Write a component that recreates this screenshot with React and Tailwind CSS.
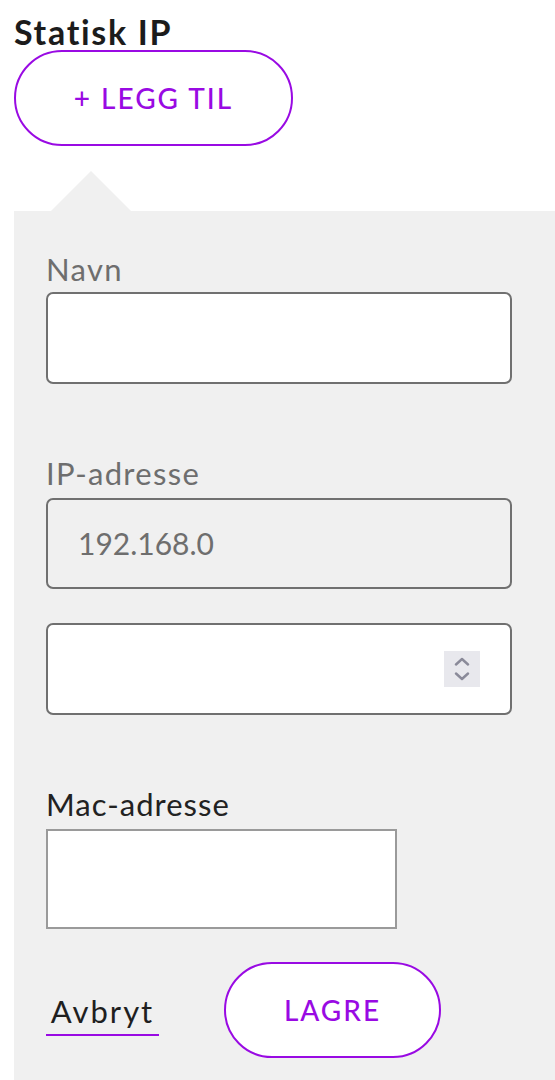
import React from "react";

export default function App() {
  return (
    <div className="w-[555px] h-[1080px] overflow-hidden bg-white font-['Lato',_sans-serif]">
      <h1 className="pl-[14px] pt-[14px] text-[34px] leading-[36px] font-bold tracking-[1.7px] text-[#1c1c1c]">
        Statisk IP
      </h1>
      <button className="ml-[14px] flex h-[96px] w-[279px] items-center justify-center rounded-full border-2 border-[#990ae3] bg-white text-[28px] font-medium tracking-[2px] text-[#990ae3]">
        + LEGG TIL
      </button>
      <div className="ml-[51px] mt-[25px] h-0 w-0 border-x-[40px] border-b-[40px] border-x-transparent border-b-[#f0f0f0]" />
      <div className="ml-[14px] bg-[#f0f0f0] pl-[32px] pr-[43px] pt-[40px] pb-[40px]">
        <label className="block h-[36px] text-[31px] leading-[36px] tracking-[1.3px] text-[#6e6e6e]">Navn</label>
        <div className="mt-[5px] h-[92px] rounded-[7px] border-2 border-[#707070] bg-white" />

        <label className="mt-[71px] block h-[36px] text-[31px] leading-[36px] tracking-[1.3px] text-[#6e6e6e]">IP-adresse</label>
        <div className="mt-[7px] flex h-[91px] items-center rounded-[7px] border-2 border-[#707070] bg-[#f0f0f0] pl-[30px] text-[30px] text-[#6e6e6e]">
          192.168.0
        </div>
        <div className="mt-[34px] flex h-[92px] items-center justify-end rounded-[7px] border-2 border-[#707070] bg-white pr-[30px]">
          <div className="flex h-[36px] w-[36px] flex-col items-center justify-center gap-[6px] bg-[#e8e8ed]">
            <svg width="16" height="9" viewBox="0 0 16 9" fill="none">
              <path d="M2 7.5 L8 2 L14 7.5" stroke="#8a8a99" strokeWidth="2.4" strokeLinecap="round" strokeLinejoin="round" />
            </svg>
            <svg width="16" height="9" viewBox="0 0 16 9" fill="none">
              <path d="M2 1.5 L8 7 L14 1.5" stroke="#8a8a99" strokeWidth="2.4" strokeLinecap="round" strokeLinejoin="round" />
            </svg>
          </div>
        </div>

        <label className="mt-[71px] block h-[36px] text-[31px] leading-[36px] tracking-[1px] text-[#222222]">Mac-adresse</label>
        <div className="mt-[7px] h-[100px] w-[351px] border-2 border-[#9a9a9a] bg-white" />

        <div className="mt-[33px] flex items-center">
          <button className="mt-[8px] w-[113px] border-b-2 border-[#990ae3] pb-[5px] text-center text-[31px] leading-[36px] tracking-[2px] text-[#1f1f1f]">
            Avbryt
          </button>
          <button className="ml-[65px] flex h-[96px] w-[217px] items-center justify-center rounded-full border-2 border-[#990ae3] bg-white text-[28px] font-medium tracking-[2px] text-[#990ae3]">
            LAGRE
          </button>
        </div>
      </div>
    </div>
  );
}
